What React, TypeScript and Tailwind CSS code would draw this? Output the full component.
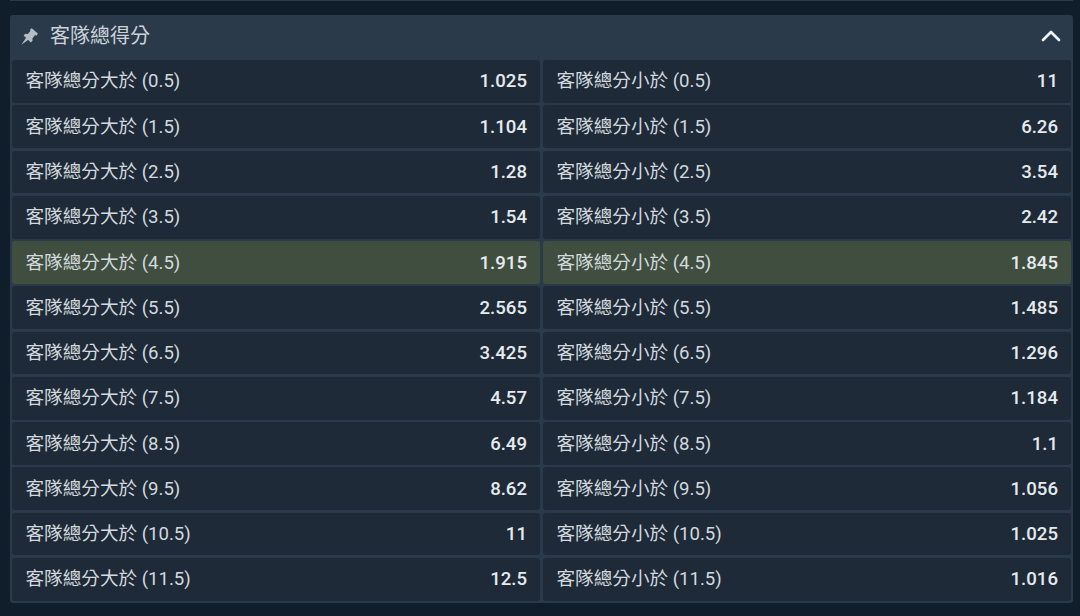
import { ChevronUp } from "lucide-react";

const rows: [string, string, string][] = [
  ["0.5", "1.025", "11"],
  ["1.5", "1.104", "6.26"],
  ["2.5", "1.28", "3.54"],
  ["3.5", "1.54", "2.42"],
  ["4.5", "1.915", "1.845"],
  ["5.5", "2.565", "1.485"],
  ["6.5", "3.425", "1.296"],
  ["7.5", "4.57", "1.184"],
  ["8.5", "6.49", "1.1"],
  ["9.5", "8.62", "1.056"],
  ["10.5", "11", "1.025"],
  ["11.5", "12.5", "1.016"],
];

function Cell({ label, value, hi }: { label: string; value: string; hi: boolean }) {
  return (
    <div
      className={`flex h-[42.77px] items-center justify-between rounded-[3px] pl-[13.5px] pr-[13px] pt-[2px] ${
        hi ? "bg-[#404e3f]" : "bg-[#1e2a38]"
      }`}
    >
      <span className="text-[18.6px] text-[#d3d9de]">{label}</span>
      <span className="text-[18.6px] font-medium text-[#e6eaed]">{value}</span>
    </div>
  );
}

export default function App() {
  return (
    <div
      className="h-[616px] w-[1080px] overflow-hidden bg-[#101e2b] pl-[10px] pr-[7px]"
      style={{ fontFamily: '"Roboto", "Noto Sans CJK TC", sans-serif' }}
    >
      <div className="h-[1px] bg-[#2a3a4b]" />
      <div className="mt-[13.5px] rounded-[3px] bg-[#2a3a4b] pb-[2.5px]">
        <div className="flex h-[45.5px] items-center justify-between pb-[2px] pl-[11px] pr-[6px]">
          <div className="flex items-center gap-[12px]">
            <svg width="17" height="17" viewBox="0 0 17 17" fill="#b4bcc4">
              <path d="M10.8.2 16.8 5.4 15.8 7.4 13.8 7.2 11.4 10.4 11.6 12.8 9.8 14.4 2.6 7.4 4.2 5.8 6.8 6 9.4 3 9 1.4Z" />
              <path d="M5.2 9.6.4 16.8 7.6 11.6Z" />
            </svg>
            <span className="text-[20px] text-[#ccd3d9]">客隊總得分</span>
          </div>
          <ChevronUp size={32} strokeWidth={2} className="text-[#eef1f3]" />
        </div>
        <div className="grid grid-cols-2 gap-x-[3px] gap-y-[2.5px] px-[2px]">
          {rows.map(([line, over, under]) => (
            <div key={line} className="contents">
              <Cell label={`客隊總分大於 (${line})`} value={over} hi={line === "4.5"} />
              <Cell label={`客隊總分小於 (${line})`} value={under} hi={line === "4.5"} />
            </div>
          ))}
        </div>
      </div>
    </div>
  );
}
